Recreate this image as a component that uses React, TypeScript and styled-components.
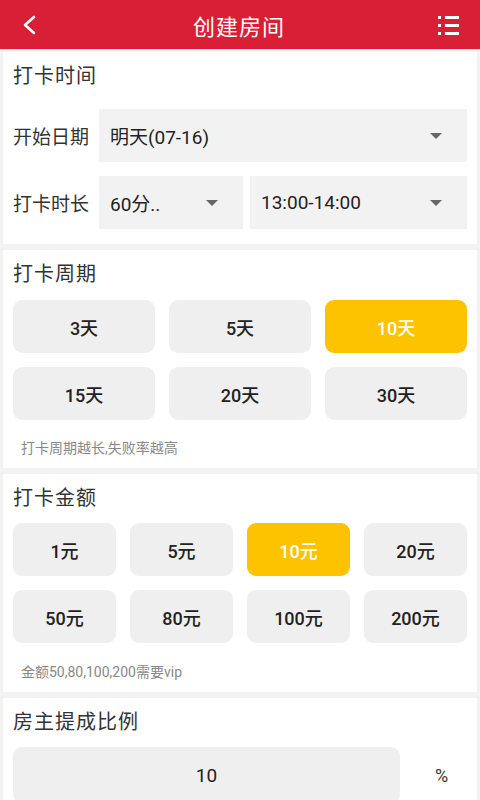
import styled, { createGlobalStyle } from 'styled-components';

const GlobalStyle = createGlobalStyle`
   html, body {
      margin: 0;
      padding: 0;
      background: #f2f2f2;
   }
   body {
      font-family: Roboto, "Noto Sans CJK SC", sans-serif;
      color: #222;
   }
   * {
      box-sizing: border-box;
   }
`;

const Page = styled.div`
   width: 480px;
   height: 800px;
   overflow: hidden;
   background: #f2f2f2;
`;

const Header = styled.div`
   height: 50px;
   background: #d91f36;
   display: flex;
   align-items: center;
   justify-content: space-between;
   padding: 0 20px 0 18px;
   border-bottom: 1px solid #e4e4e4;
`;

const Title = styled.div`
   color: #fff;
   font-size: 22px;
   letter-spacing: 1px;
`;

const IconSlot = styled.div`
   width: 22px;
   height: 22px;
   display: flex;
   align-items: center;
   justify-content: center;
`;

const Content = styled.div`
   display: flex;
   flex-direction: column;
   gap: 6px;
   padding: 2px 3px 0;
`;

const Card = styled.div<{ $pb?: number }>`
   background: #fff;
   padding: 11px 10px ${(p) => p.$pb ?? 14}px;
`;

const CardTitle = styled.div<{ $gap: number }>`
   font-size: 20px;
   letter-spacing: 1px;
   line-height: 26px;
   color: #333;
   margin-bottom: ${(p) => p.$gap}px;
`;

const FieldRow = styled.div`
   display: flex;
   align-items: center;
   gap: 7px;
   & + & {
      margin-top: 14px;
   }
`;

const FieldLabel = styled.div`
   font-size: 19px;
   color: #333;
   width: 79px;
`;

const Select = styled.div<{ $w?: number }>`
   height: 53px;
   background: #f2f2f2;
   display: flex;
   align-items: center;
   justify-content: space-between;
   padding: 0 25px 0 11px;
   font-size: 19px;
   color: #222;
   ${(p) => (p.$w ? `width: ${p.$w}px;` : 'flex: 1;')}
`;

const Caret = styled.span`
   width: 0;
   height: 0;
   border-left: 6px solid transparent;
   border-right: 6px solid transparent;
   border-top: 6px solid #666;
`;

const OptionGrid = styled.div<{ $cols: number }>`
   display: grid;
   grid-template-columns: repeat(${(p) => p.$cols}, 1fr);
   gap: 14px;
`;

const Option = styled.div<{ $active?: boolean }>`
   height: 53px;
   border-radius: 9px;
   background: ${(p) => (p.$active ? '#fdc300' : '#efefef')};
   color: ${(p) => (p.$active ? '#fff' : '#222')};
   display: flex;
   align-items: center;
   justify-content: center;
   font-size: 18px;
   font-weight: 500;
`;

const Hint = styled.div<{ $mt: number }>`
   margin-top: ${(p) => p.$mt}px;
   padding-left: 8px;
   font-size: 14px;
   color: #888;
`;

const InputRow = styled.div`
   display: flex;
   align-items: center;
`;

const ValueBox = styled.div`
   width: 387px;
   height: 56px;
   border-radius: 9px;
   background: #efefef;
   display: flex;
   align-items: center;
   justify-content: center;
   font-size: 19px;
   color: #222;
`;

const Unit = styled.div`
   flex: 1;
   text-align: center;
   font-size: 18px;
   color: #333;
   padding-left: 16px;
`;

const periods = ['3天', '5天', '10天', '15天', '20天', '30天'];
const amounts = ['1元', '5元', '10元', '20元', '50元', '80元', '100元', '200元'];

export default function App(): JSX.Element {
   return (
      <Page>
         <GlobalStyle />
         <Header>
            <IconSlot>
               <svg width="14" height="20" viewBox="0 0 14 20">
                  <path d="M12 2 L3 10 L12 18" stroke="#fff" strokeWidth="2.6" fill="none" strokeLinecap="round" strokeLinejoin="round" />
               </svg>
            </IconSlot>
            <Title>创建房间</Title>
            <IconSlot>
               <svg width="21" height="20" viewBox="0 0 21 20">
                  <g fill="#fff">
                     <rect x="0" y="1" width="3" height="3" />
                     <rect x="7" y="1" width="14" height="3" />
                     <rect x="0" y="9" width="3" height="3" />
                     <rect x="7" y="9" width="14" height="3" />
                     <rect x="0" y="17" width="3" height="3" />
                     <rect x="7" y="17" width="14" height="3" />
                  </g>
               </svg>
            </IconSlot>
         </Header>
         <Content>
            <Card $pb={15}>
               <CardTitle $gap={20}>打卡时间</CardTitle>
               <FieldRow>
                  <FieldLabel>开始日期</FieldLabel>
                  <Select>
                     明天(07-16)
                     <Caret />
                  </Select>
               </FieldRow>
               <FieldRow>
                  <FieldLabel>打卡时长</FieldLabel>
                  <Select $w={144}>
                     60分..
                     <Caret />
                  </Select>
                  <Select>
                     13:00-14:00
                     <Caret />
                  </Select>
               </FieldRow>
            </Card>
            <Card $pb={11}>
               <CardTitle $gap={13}>打卡周期</CardTitle>
               <OptionGrid $cols={3}>
                  {periods.map((p) => (
                     <Option key={p} $active={p === '10天'}>
                        {p}
                     </Option>
                  ))}
               </OptionGrid>
               <Hint $mt={17}>打卡周期越长,失败率越高</Hint>
            </Card>
            <Card $pb={11}>
               <CardTitle $gap={12}>打卡金额</CardTitle>
               <OptionGrid $cols={4}>
                  {amounts.map((a) => (
                     <Option key={a} $active={a === '10元'}>
                        {a}
                     </Option>
                  ))}
               </OptionGrid>
               <Hint $mt={18}>金额50,80,100,200需要vip</Hint>
            </Card>
            <Card>
               <CardTitle $gap={12}>房主提成比例</CardTitle>
               <InputRow>
                  <ValueBox>10</ValueBox>
                  <Unit>%</Unit>
               </InputRow>
            </Card>
         </Content>
      </Page>
   );
}
